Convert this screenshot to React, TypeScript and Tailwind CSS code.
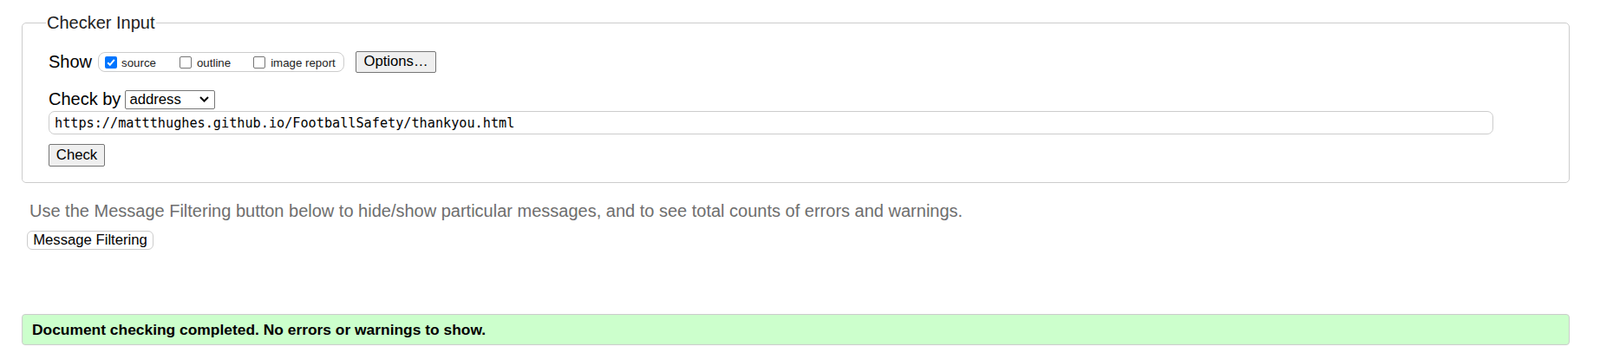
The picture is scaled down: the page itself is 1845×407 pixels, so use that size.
import React from 'react';

const Box = ({ checked }: { checked?: boolean }) =>
  checked ? (
    <span className="block w-[14px] h-[14px] rounded-[2px] bg-[#0075ff] flex items-center justify-center shrink-0">
      <svg width="12" height="12" viewBox="0 0 12 12">
        <path d="M2.2 6.2 L4.8 8.8 L9.8 2.8" fill="none" stroke="#fff" strokeWidth="2" />
      </svg>
    </span>
  ) : (
    <span className="block w-[14px] h-[14px] rounded-[2px] border border-[#767676] bg-white shrink-0" />
  );

export default function App() {
  return (
    <div className="w-[1845px] h-[407px] bg-white pt-[15px] pl-[25px] font-['Liberation_Sans',Arial,sans-serif] text-black">
      {/* Checker input */}
      <fieldset className="w-[1785px] border border-[#ccc] rounded-[5px] pl-[30px] pb-[18px]">
        <legend className="text-[20px] leading-[23px] -ml-[3px] px-[1px] text-[#222]">Checker Input</legend>

        <div className="flex items-center h-[25px] mt-[21px]">
          <span className="text-[20px] leading-[23px]">Show</span>
          <div className="ml-[7px] flex items-center h-[23px] w-[284px] border border-[#ccc] rounded-[8px] pl-[7px] text-[13.3px] text-[#222]">
            <Box checked />
            <span className="ml-[5px] mt-[3px]">source</span>
            <span className="ml-[27px] flex"><Box /></span>
            <span className="ml-[6px] mt-[3px]">outline</span>
            <span className="ml-[26px] flex"><Box /></span>
            <span className="ml-[6px] mt-[3px]">image report</span>
          </div>
          <button className="ml-[13px] h-[25px] w-[93px] bg-[#efefef] border border-[#767676] rounded-[2px] text-[16.7px] leading-none">
            Options…
          </button>
        </div>

        <div className="flex items-center h-[23px] mt-[19px]">
          <span className="text-[20px] leading-[23px]">Check by</span>
          <div className="ml-[5px] w-[104px] h-[22px] border border-[#767676] rounded-[2px] flex items-center justify-between pl-[4px] pr-[6px] text-[16.7px]">
            <span>address</span>
            <svg width="11" height="7" viewBox="0 0 11 7">
              <path d="M1 1 L5.5 5.5 L10 1" fill="none" stroke="#000" strokeWidth="2" />
            </svg>
          </div>
        </div>

        <input
          readOnly
          defaultValue="https://mattthughes.github.io/FootballSafety/thankyou.html"
          className="block mt-[2px] w-[1666px] h-[27px] border border-[#ccc] rounded-[7px] pl-[6px] font-['DejaVu_Sans_Mono',monospace] text-[15.2px] outline-none"
        />

        <button className="block mt-[11px] w-[65px] h-[26px] bg-[#efefef] border border-[#767676] rounded-[2px] text-[16.7px] leading-none">
          Check
        </button>
      </fieldset>

      <p className="mt-[21px] ml-[9px] text-[20px] leading-[23px] text-[#6e6e6e]">
        Use the Message Filtering button below to hide/show particular messages, and to see total counts of errors and warnings.
      </p>
      <button className="block mt-[11px] ml-[6px] w-[146px] h-[22px] bg-white border border-[#ccc] rounded-[6px] text-[16.7px] leading-none">
        Message Filtering
      </button>

      {/* Result */}
      <div className="mt-[74px] w-[1785px] h-[36px] bg-[#ccffcc] border border-[#ccc] rounded-[4px] flex items-center pl-[11px]">
        <span className="text-[17.4px] font-bold">Document checking completed. No errors or warnings to show.</span>
      </div>
    </div>
  );
}
